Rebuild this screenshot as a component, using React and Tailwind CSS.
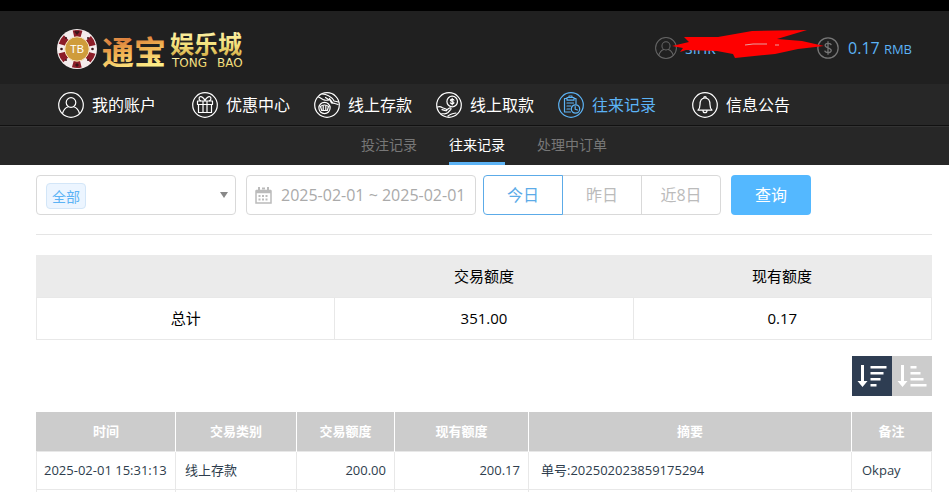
import { useState } from 'react'

const icons = {
  user: (
    <>
      <circle cx="13" cy="10.5" r="4.8" />
      <path d="M4.500 21.500c1-3.800 3.200-6 5.800-6.800M21.500 21.500c-1-3.800-3.200-6-5.800-6.800" />
    </>
  ),
  gift: (
    <>
      <path d="M5.500 9h15v3.500h-15zM6.500 12.500v8h13v-8M11 9v11.500M15 9v11.500" />
      <path d="M13 8.800C12 6 9.500 4 8 4.800 6.500 5.600 7 8 8.500 8.800M13 8.800C14 6 16.500 4 18 4.800c1.500.8 1 3.200-.5 4" />
    </>
  ),
  deposit: (
    <>
      <circle cx="10.500" cy="16" r="5.600" />
      <path d="M6.500 14.500c2-2 6-2 8 0l-1.200 4H7.700zM9.200 13.500v4.500M11.800 13.500v4.500" />
      <path d="M8 2c2.500 0 5 .8 7 2 2.500 1.300 4 3 5 5l4.500 1" />
      <path d="M4.500 5c2 .5 4 2.700 6.500 3.200 2 .3 3.500-.5 5-.2l1.500 3c1.200.3 2.500-.2 3.500.5l3 1M11.500 5.500l3 2M15.500 6.500l3 4" />
    </>
  ),
  withdraw: (
    <>
      <circle cx="16.200" cy="9.500" r="5.300" />
      <path d="M17.900 8.200c-.3-1-3.300-1.200-3.400.1-.1 1.500 3.500.9 3.400 2.500 0 1.400-3.100 1.200-3.500.1M16.200 6.300v6.500" />
      <path d="M1.500 15c2-.8 3.500-.3 5 .8l3.500 1.200c1.500.8 1 2-.5 1.700l-3.500-1M10.500 18l3-2c1.200-.6 2 .3 1.300 1.300L12 20.500c-1 1-2 1.300-3.500 1.300-1.200 0-2.500-.3-3.500.2" />
      <path d="M12 24c2-2 5-2.500 8-3" />
    </>
  ),
  record: (
    <>
      <path d="M12.500 20H6.500V6.500h2.300M16.200 6.500H18V12M9 5.500h7v2.700H9z" />
      <path d="M11 5.500V4h3v1.500M9 11h6.500M9 14h4M9 17h3" />
      <circle cx="17.500" cy="17" r="4.200" />
      <path d="M17.200 14.500v2.700l2.300.8" />
    </>
  ),
  bell: (
    <path d="M6 18.200c1.500-1.500 2-3 2-5.500 0-4 1.500-6.700 5-6.700s5 2.700 5 6.700c0 2.500.5 4 2 5.500zM11.800 6c-.3-2 2.700-2 2.400 0M11 18.400c0 3 4 3 4 0" />
  ),
}

const menu = [
  { label: '我的账户', icon: 'user', space: 'mr-3' },
  { label: '优惠中心', icon: 'gift' },
  { label: '线上存款', icon: 'deposit' },
  { label: '线上取款', icon: 'withdraw' },
  { label: '往来记录', icon: 'record', active: true, space: 'mr-3' },
  { label: '信息公告', icon: 'bell' },
]

const subMenu = ['投注记录', '往来记录', '处理中订单']
const ranges = ['今日', '昨日', '近8日']

const records = [
  {
    time: '2025-02-01 15:31:13',
    type: '线上存款',
    amount: '200.00',
    balance: '200.17',
    summary: '单号:202502023859175294',
    note: 'Okpay',
  },
]

function RoundIcon({ name, className }) {
  return (
    <svg viewBox="0 0 26 26" className={className} fill="none" stroke="currentColor" strokeWidth="1.2" strokeLinecap="round" strokeLinejoin="round" aria-hidden="true">
      <circle cx="13" cy="13" r="12.300" />
      {icons[name]}
    </svg>
  )
}

function Logo() {
  return (
    <svg width="190" height="56" viewBox="0 -7 190 56" role="img" aria-label="通宝娱乐城">
      <defs>
        <linearGradient id="copper" x1="0" y1="0" x2="0.3" y2="1">
          <stop offset="0" stopColor="#f6dc78" />
          <stop offset="0.35" stopColor="#dc7f3c" />
          <stop offset="0.6" stopColor="#f0b050" />
          <stop offset="1" stopColor="#fff08a" />
        </linearGradient>
        <linearGradient id="gold" x1="0" y1="0" x2="0" y2="1">
          <stop offset="0" stopColor="#fff8b8" />
          <stop offset="0.6" stopColor="#f3df78" />
          <stop offset="1" stopColor="#c99a35" />
        </linearGradient>
      </defs>
      {/* poker chip */}
      <circle cx="20" cy="22" r="20" fill="#f4ecec" />
      <circle cx="20" cy="22" r="15.500" fill="none" stroke="#8c1d28" strokeWidth="7" strokeDasharray="8.110 8.120" strokeDashoffset="-4.060" />
      <circle cx="20" cy="22" r="12.200" fill="#cf9c3c" stroke="#f7e6c8" strokeWidth="1" />
      <g fill="#3a1518">
        <path d="M20 8l-2.500-3c0-1.500 2-1.500 2.500-.3.500-1.200 2.500-1.200 2.500.3z" />
        <path d="M20 36l2 2-2 2-2-2z" />
        <circle cx="4.500" cy="22" r="1.300" />
        <circle cx="35.500" cy="22" r="1.300" />
        <circle cx="9" cy="11" r="1" />
        <circle cx="31" cy="11" r="1" />
        <circle cx="9" cy="33" r="1" />
        <circle cx="31" cy="33" r="1" />
      </g>
      <text x="20" y="26" textAnchor="middle" fontSize="11" fill="#fff" fontFamily="Liberation Sans, sans-serif">TB</text>
      <g fontFamily="Noto Sans CJK SC, sans-serif" fontWeight="700">
        <text x="45" y="37" fontSize="32" fill="url(#copper)">通宝</text>
        <text x="113" y="26" fontSize="24" fill="url(#gold)">娱乐城</text>
      </g>
      <g fontFamily="DejaVu Sans, sans-serif" fontSize="12" fill="url(#gold)">
        <text x="115" y="40">TONG</text>
        <text x="160" y="40">BAO</text>
      </g>
    </svg>
  )
}

function SortIcon({ bars }) {
  return (
    <svg viewBox="0 0 40 40" className="size-10" fill="#fff" aria-hidden="true">
      <path d="M9 9h3v16h3.500L10.500 31 5.500 25H9z" />
      {bars.map((w, i) => (
        <rect key={i} x="18.500" y={10 + i * 6} width={w} height="2.500" />
      ))}
    </svg>
  )
}

export default function App() {
  const [tab, setTab] = useState('往来记录')
  const [range, setRange] = useState('今日')
  const [dates, setDates] = useState('2025-02-01 ~ 2025-02-01')

  return (
    <div className="bg-white font-['Open_Sans','Noto_Sans_CJK_SC',sans-serif] text-black">
      <header className="border-t-[11px] border-black bg-[#202020]">
        <div className="flex h-[73px] items-center justify-between pr-[37px] pl-[57px]">
          <a href="#home"><Logo /></a>
          <div className="relative flex items-center text-[#5cb3f5]">
            <RoundIcon name="user" className="size-[22px] text-[#666]" />
            <span className="ml-2 w-[132px] text-base">sirik</span>
            <svg viewBox="0 0 26 26" className="size-[22px] text-[#777]" fill="none" stroke="currentColor" strokeWidth="1.5" aria-hidden="true">
              <circle cx="13" cy="13" r="12" />
              <path d="M16.800 9.500c-.6-2.500-7-2.800-7.200.3-.1 3.500 7.200 2.400 7.200 6.200 0 3.300-7 3.100-7.700.1M13 5v16" />
            </svg>
            <span className="ml-[9px] text-base">0.17 <span className="text-[13px]">RMB</span></span>
            {/* brush stroke that hides the account name */}
            <svg viewBox="0 0 152 36" className="absolute left-[17px] h-9 w-[152px]" aria-hidden="true">
              <path fill="#fe0000" d="M0 16l17-4-5-5h34L80 1l55-1-30 9 25 2 22 5-26 3-23 5-40 4-2-4-16-3-31-1-6 2 3-4z" />
              <path stroke="#e9a0a0" strokeWidth="1" fill="none" d="M73 15l8-1 14 0M103 15l4 0" />
            </svg>
          </div>
        </div>

        <nav className="flex h-[42px] items-center gap-6 border-b border-[#111] bg-[#272727] pl-[58px]">
          {menu.map((item) => (
            <a key={item.label} href="#menu" className={`flex shrink-0 items-center gap-2 text-base ${item.active ? 'text-[#5cb3f5]' : 'text-white'} ${item.space || ''}`}>
              <RoundIcon name={item.icon} className="size-[26px]" />
              {item.label}
            </a>
          ))}
        </nav>

        <nav className="flex h-[39px] justify-center gap-8 border-t border-[#333] bg-[#272727] pr-[17px] pl-9 text-sm">
          {subMenu.map((label) => (
            <a
              key={label}
              href="#records"
              onClick={() => setTab(label)}
              className={`flex items-center border-b-[3px] ${tab === label ? 'border-[#5cb3f5] text-white' : 'border-transparent text-[#777]'}`}
            >
              {label}
            </a>
          ))}
        </nav>
      </header>

      <main className="pt-[10px] pr-[17px] pl-9">
        <form className="flex items-center border-b border-[#e5e5e5] pb-[19px]" onSubmit={(e) => e.preventDefault()}>
          <div className="relative mr-[10px] h-10 w-[200px] rounded border border-[#d9d9d9]">
            <span className="absolute top-[7px] left-[9px] h-[26px] w-10 rounded-sm border border-[#d3e6f8] bg-[#ecf5ff]" />
            <select aria-label="交易类别" className="relative size-full appearance-none bg-transparent pt-1 pl-[15px] text-sm text-[#5cb3f5] outline-none">
              <option>全部</option>
              <option>线上存款</option>
              <option>线上取款</option>
            </select>
            <svg viewBox="0 0 8 6" className="pointer-events-none absolute top-4 right-[7px] h-1.5 w-2" fill="#888" aria-hidden="true">
              <path d="M0 0h8L4 6z" />
            </svg>
          </div>

          <div className="relative mr-[7px]">
            <svg viewBox="0 0 17 17" className="absolute top-3 left-[9px] size-[17px]" fill="none" stroke="#bbb" aria-hidden="true">
              <path strokeWidth="1.500" d="M1 4h15v12H1z" />
              <path strokeWidth="3.500" d="M1 4.500h15" />
              <path strokeWidth="2" d="M4 0v4M13 0v4M7 1.500h3" />
              <path strokeWidth="2" strokeDasharray="2 1.500" d="M3.500 9h10.500M3.500 12.500h10.500" />
            </svg>
            <input
              aria-label="日期"
              value={dates}
              onChange={(e) => setDates(e.target.value)}
              className="h-10 w-[230px] rounded border border-[#d9d9d9] pl-[34px] text-base text-[#aaa] outline-none"
            />
          </div>

          <div className="mr-[10px] flex text-base">
            {ranges.map((label) => (
              <button
                key={label}
                type="button"
                onClick={() => setRange(label)}
                className={`-mr-px h-10 w-20 border first:rounded-l last:mr-0 last:rounded-r ${range === label ? 'relative border-[#5cabe8] text-[#5cabe8]' : 'border-[#d9d9d9] text-[#bbb]'}`}
              >
                {label}
              </button>
            ))}
          </div>

          <button type="submit" className="h-10 w-20 rounded bg-[#54b8ff] text-base text-white">查询</button>
        </form>

        <table className="mt-5 w-full table-fixed border-collapse text-center text-[15px]">
          <thead>
            <tr className="h-[42px] border border-[#ebebeb] bg-[#ebebeb]">
              <td />
              <th scope="col" className="font-normal">交易额度</th>
              <th scope="col" className="font-normal">现有额度</th>
            </tr>
          </thead>
          <tbody>
            <tr className="h-[42px]">
              <th scope="row" className="border border-[#e8e8e8] font-normal">总计</th>
              <td className="border border-[#e8e8e8]">351.00</td>
              <td className="border border-[#e8e8e8]">0.17</td>
            </tr>
          </tbody>
        </table>

        <div className="my-4 flex justify-end">
          <button type="button" aria-label="降序" className="bg-[#2e3d52]"><SortIcon bars={[16, 13, 10, 6]} /></button>
          <button type="button" aria-label="升序" className="bg-[#ccc]"><SortIcon bars={[6, 10, 13, 16]} /></button>
        </div>

        <table className="w-full table-fixed border-collapse text-[13px] text-[#2e3d4d]">
          <colgroup>
            <col className="w-[139px]" />
            <col className="w-[121px]" />
            <col className="w-[98px]" />
            <col className="w-[134px]" />
            <col />
            <col className="w-20" />
          </colgroup>
          <thead>
            <tr className="h-[39px] border border-[#ccc] bg-[#ccc] text-white">
              {['时间', '交易类别', '交易额度', '现有额度', '摘要', '备注'].map((h) => (
                <th key={h} scope="col" className="border-r border-white font-bold last:border-r-0">{h}</th>
              ))}
            </tr>
          </thead>
          <tbody className="[&_td]:border [&_td]:border-[#e8e8e8]">
            {records.map((r) => (
              <tr key={r.summary} className="h-[38px]">
                <td className="pl-[7px] whitespace-nowrap">{r.time}</td>
                <td className="pl-[9px]">{r.type}</td>
                <td className="pr-2 text-right">{r.amount}</td>
                <td className="pr-2 text-right">{r.balance}</td>
                <td className="pl-3">{r.summary}</td>
                <td className="pl-[10px]">{r.note}</td>
              </tr>
            ))}
            <tr className="h-1">
              <td /><td /><td /><td /><td /><td />
            </tr>
          </tbody>
        </table>
      </main>
    </div>
  )
}
